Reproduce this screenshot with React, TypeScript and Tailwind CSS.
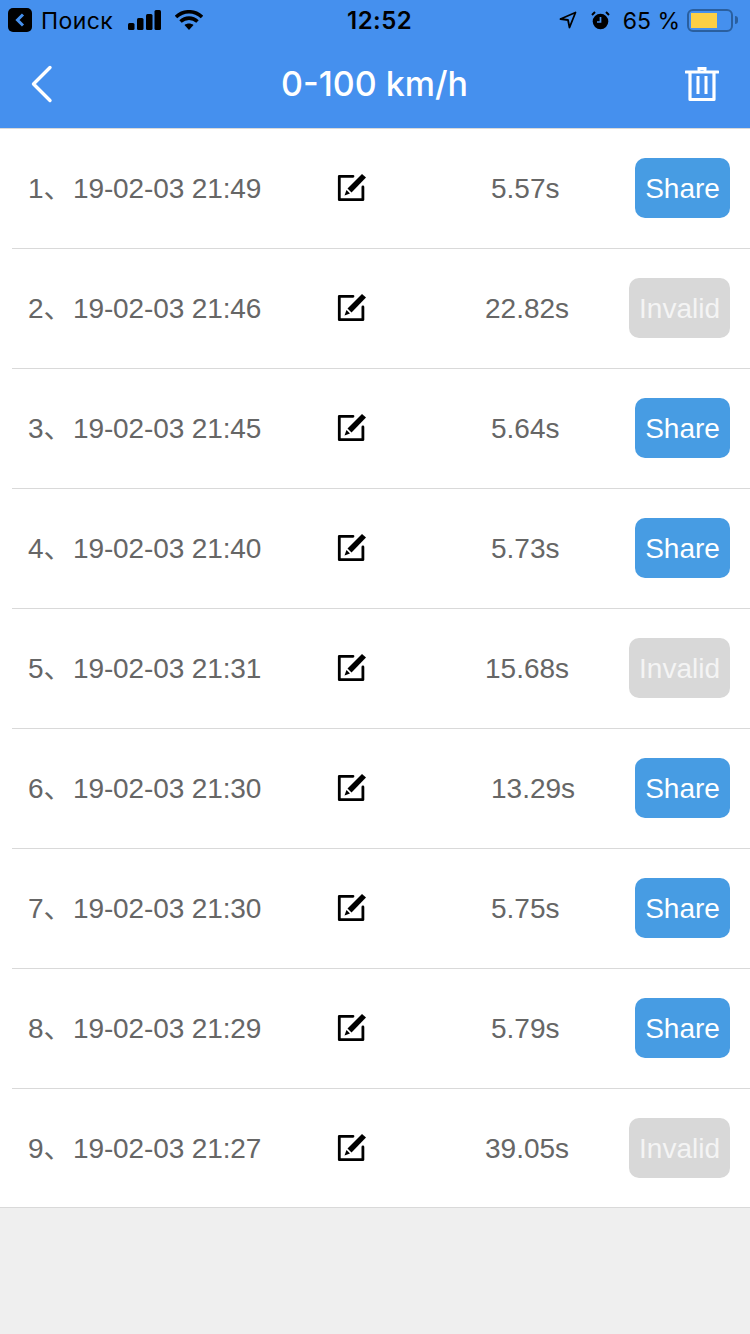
import React from 'react';

interface Run {
    index: number;
    stamp: string;
    time: string;
    valid: boolean;
    timeClass: string;
}

const runs: Run[] = [
    { index: 1, stamp: '19-02-03 21:49', time: '5.57s', valid: true, timeClass: 'ml-[124px]' },
    { index: 2, stamp: '19-02-03 21:46', time: '22.82s', valid: false, timeClass: 'ml-[118px]' },
    { index: 3, stamp: '19-02-03 21:45', time: '5.64s', valid: true, timeClass: 'ml-[124px]' },
    { index: 4, stamp: '19-02-03 21:40', time: '5.73s', valid: true, timeClass: 'ml-[124px]' },
    { index: 5, stamp: '19-02-03 21:31', time: '15.68s', valid: false, timeClass: 'ml-[118px]' },
    { index: 6, stamp: '19-02-03 21:30', time: '13.29s', valid: true, timeClass: 'ml-[124px]' },
    { index: 7, stamp: '19-02-03 21:30', time: '5.75s', valid: true, timeClass: 'ml-[124px]' },
    { index: 8, stamp: '19-02-03 21:29', time: '5.79s', valid: true, timeClass: 'ml-[124px]' },
    { index: 9, stamp: '19-02-03 21:27', time: '39.05s', valid: false, timeClass: 'ml-[118px]' },
];

const EditIcon = () => (
    <svg width="30" height="30" viewBox="0 0 30 30" className="shrink-0">
        <path d="M16 3.3H2.3V26.7H25.9V14" fill="none" stroke="#000" strokeWidth="2.8" strokeLinecap="round" strokeLinejoin="round" />
        <path d="M25 1L29 4.5L14.5 19.5L10.5 15.5Z" fill="#000" />
        <path d="M9.5 17L13 20.5L7.5 22.5Z" fill="#000" />
    </svg>
);

const StatusBar = () => (
    <div className="grid grid-cols-[339px_auto_1fr] items-center h-10 pl-2 pr-3 text-black font-['Inter',sans-serif]">
        <div className="flex items-center">
            <div className="w-6 h-6 rounded-[5px] bg-black flex items-center justify-center">
                <svg width="12" height="16" viewBox="0 0 12 16">
                    <path d="M9 2.5L3.5 8L9 13.5" fill="none" stroke="#4590ee" strokeWidth="3" />
                </svg>
            </div>
            <span className="ml-[9px] pt-[2px] text-[23px] leading-none tracking-[0.4px]">Поиск</span>
            <svg width="33" height="20" viewBox="0 0 33 20" className="ml-[15px]">
                <rect x="0" y="13" width="6.5" height="7" rx="1.5" fill="#000" />
                <rect x="9" y="8" width="6.5" height="12" rx="1.5" fill="#000" />
                <rect x="18" y="4" width="6.5" height="16" rx="1.5" fill="#000" />
                <rect x="26.5" y="0" width="6.5" height="20" rx="1.5" fill="#000" />
            </svg>
            <svg width="28" height="20" viewBox="0 0 28 20" className="ml-[14px]">
                <path d="M1 7C8.5 0 19.5 0 27 7" fill="none" stroke="#000" strokeWidth="3.6" />
                <path d="M5.5 11.5C10.5 7 17.5 7 22.5 11.5" fill="none" stroke="#000" strokeWidth="3.6" />
                <path d="M9.5 15C12 13 16 13 18.5 15L14 20Z" fill="#000" />
            </svg>
        </div>
        <span className="pt-[2px] text-[24px] leading-none font-semibold tracking-[0.5px]">12:52</span>
        <div className="flex items-center justify-end">
            <svg width="18" height="18" viewBox="0 0 18 18">
                <path d="M1.5 8L16.5 1.5L10.5 16.5L9 9Z" fill="none" stroke="#000" strokeWidth="1.8" strokeLinejoin="round" />
            </svg>
            <svg width="19" height="19" viewBox="0 0 19 19" className="ml-[14px]">
                <circle cx="9.5" cy="10.5" r="7.8" fill="#000" />
                <path d="M9.5 6V11H6" fill="none" stroke="#4590ee" strokeWidth="1.7" />
                <path d="M1 4L4 1M18 4L15 1" stroke="#000" strokeWidth="2" />
            </svg>
            <span className="ml-[13px] pt-[2px] text-[23px] leading-none">65 %</span>
            <div className="ml-[7px] w-[46px] h-[23px] rounded-[6px] border-2 border-[#2a5f9f] p-[2px] flex">
                <div className="w-[26px] bg-[#fccf45]" />
            </div>
            <div className="ml-[2px] w-[3px] h-[8px] rounded-r-full bg-[#2a5f9f]" />
        </div>
    </div>
);

export default function App() {
    return (
        <div className="w-[750px] h-[1334px] bg-[#efefef] font-['Liberation_Sans','Noto_Sans_CJK_SC',sans-serif]">
            <header className="h-[128px] bg-[#4590ee]">
                <StatusBar />
                <div className="flex items-center justify-between h-[88px] pl-[30px] pr-[31px]">
                    <div className="w-[34px]">
                        <svg width="24" height="38" viewBox="0 0 24 38">
                            <path d="M20 2.5L3.5 19L20 35.5" fill="none" stroke="#fff" strokeWidth="3.4" strokeLinecap="round" strokeLinejoin="round" />
                        </svg>
                    </div>
                    <h1 className="text-[34px] leading-none font-medium text-white font-['Inter',sans-serif]">0-100 km/h</h1>
                    <svg width="34" height="36" viewBox="0 0 34 36">
                        <path d="M1 6H33M14 4V2.5H20V4" fill="none" stroke="#fff" strokeWidth="3" strokeLinecap="round" />
                        <path d="M5 6V33.5H29V6" fill="none" stroke="#fff" strokeWidth="3.2" strokeLinejoin="round" />
                        <path d="M13 10V28M21 10V28" fill="none" stroke="#fff" strokeWidth="3" />
                    </svg>
                </div>
            </header>
            <main className="bg-white border-t border-b border-[#d9d9d9]">
                {runs.map((run, i) => (
                    <div
                        key={run.index}
                        className={`flex items-center ml-3 pl-4 pr-5 text-[28px] text-[#666] ${i < runs.length - 1 ? 'h-[120px] pb-px border-b border-[#d9d9d9]' : 'h-[118px]'}`}
                    >
                        <span className="w-[309px] shrink-0 flex pt-[2px]">
                            <span className="w-[45px]">{run.index}、</span>
                            <span className="tracking-[-0.12px]">{run.stamp}</span>
                        </span>
                        <EditIcon />
                        <span className={`pt-[2px] ${run.timeClass}`}>{run.time}</span>
                        {run.valid ? (
                            <button className="ml-auto h-[60px] w-[95px] pt-[2px] rounded-[10px] bg-[#479ce3] text-white text-[28px]">Share</button>
                        ) : (
                            <button className="ml-auto h-[60px] w-[101px] pt-[2px] rounded-[10px] bg-[#d8d8d8] text-[#f4f4f4] text-[28px]">Invalid</button>
                        )}
                    </div>
                ))}
            </main>
        </div>
    );
}
